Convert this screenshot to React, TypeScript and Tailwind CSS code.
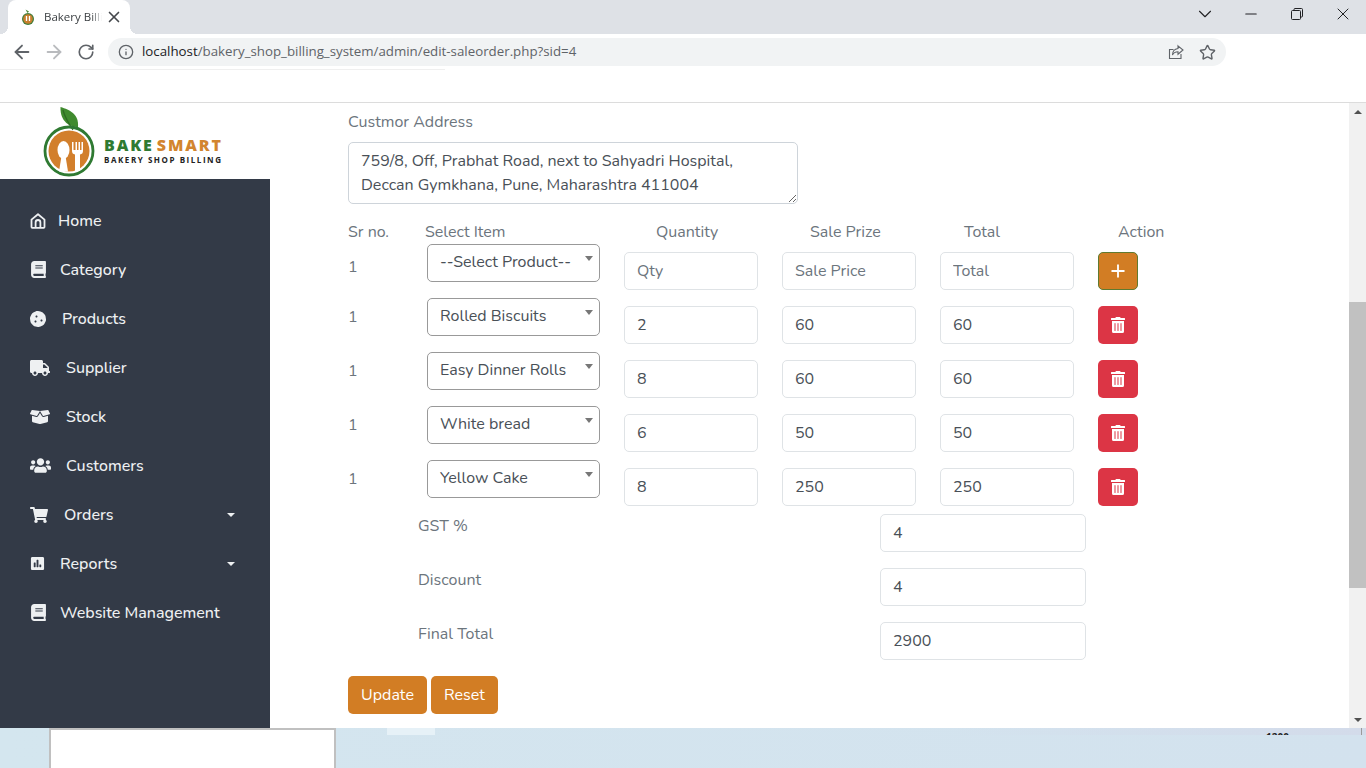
import { ArrowLeft, ArrowRight, RotateCw, Info, Star, X, ChevronDown, Minus, Plus } from 'lucide-react';
import { FaBook, FaCookie, FaTruck, FaBoxOpen, FaUsers, FaShoppingCart, FaPoll, FaTrashAlt } from 'react-icons/fa';

const body = "font-['Nunito','Lato','Open_Sans',sans-serif]";

function HomeIcon() {
  return (
    <svg width="16" height="16" viewBox="0 0 16 16" fill="none" stroke="currentColor" strokeWidth="1.8" strokeLinejoin="round">
      <path d="M1.5 6.6 8 1.2l6.500 5.400V14a.8.8 0 0 1-.8.8H2.300a.8.8 0 0 1-.8-.8Z" />
      <path d="M5.600 14.800V9.400a2.400 2.400 0 0 1 4.800 0v5.400" />
    </svg>
  );
}

const navItems = [
  { label: 'Home', icon: <HomeIcon />, box: 'w-[28px]' },
  { label: 'Category', icon: <FaBook size={17} />, box: 'w-[30px]' },
  { label: 'Products', icon: <FaCookie size={16} />, box: 'w-[32px]' },
  { label: 'Supplier', icon: <FaTruck size={20} />, box: 'w-[36px]' },
  { label: 'Stock', icon: <FaBoxOpen size={20} />, box: 'w-[36px]' },
  { label: 'Customers', icon: <FaUsers size={21} />, box: 'w-[36px]' },
  { label: 'Orders', icon: <FaShoppingCart size={18} />, box: 'w-[34px]', caret: true },
  { label: 'Reports', icon: <FaPoll size={15} />, box: 'w-[30px]', caret: true },
  { label: 'Website Management', icon: <FaBook size={17} />, box: 'w-[30px]' },
];

const rows = [
  { item: 'Rolled Biscuits', qty: '2', price: '60', total: '60' },
  { item: 'Easy Dinner Rolls', qty: '8', price: '60', total: '60' },
  { item: 'White bread', qty: '6', price: '50', total: '50' },
  { item: 'Yellow Cake', qty: '8', price: '250', total: '250' },
];

const totals = [
  { label: 'GST %', value: '4' },
  { label: 'Discount', value: '4' },
  { label: 'Final Total', value: '2900' },
];

const inputClass =
  'h-[38px] w-[134px] rounded-[5px] border border-[#dfe3e6] bg-white px-3 text-base text-[#495057] outline-none placeholder:text-[#6c757d]';

function SelectBox({ text }: { text: string }) {
  return (
    <div className="flex h-[38px] w-[173px] shrink-0 items-start justify-between rounded-[5px] border border-[#999] bg-white pl-3 pr-[6px] pt-[5px] text-[#495057]">
      <span className="leading-6">{text}</span>
      <span className="mt-[6px] h-0 w-0 border-x-[4px] border-t-[5px] border-x-transparent border-t-[#777]" />
    </div>
  );
}

function BrowserBar() {
  return (
    <div className="font-['Open_Sans',sans-serif]">
      <div className="flex h-[34px] bg-[#dee1e6] pl-2">
        <div className="relative flex h-[34px] w-[122px] items-center rounded-t-lg bg-white pl-[12px]">
          <span className="absolute -left-2 bottom-0 h-2 w-2 bg-[radial-gradient(circle_at_0_0,transparent_8px,white_8px)]" />
          <span className="absolute -right-2 bottom-0 h-2 w-2 bg-[radial-gradient(circle_at_100%_0,transparent_8px,white_8px)]" />
          <svg width="16" height="18" viewBox="0 0 16 18">
            <path d="M7.500 5 5.500 1.500 9 3.500Z" fill="#4a8a35" />
            <circle cx="8" cy="11" r="6" fill="#3f7d3a" />
            <circle cx="8" cy="11" r="4.800" fill="#c97f2e" />
            <path d="M6.500 8v5M9.500 8v5" stroke="#fff" strokeWidth="1.300" />
          </svg>
          <span className="ml-[8px] w-[58px] whitespace-nowrap text-[11.5px] text-[#3c4043] [mask-image:linear-gradient(90deg,#000_82%,transparent)]">Bakery Billi</span>
          <X size={18} strokeWidth={2.2} className="ml-[3px] text-[#45484c]" />
        </div>
        <div className="ml-auto flex items-center pb-[6px] text-[#202124]">
          <div className="flex w-[46px] justify-center"><ChevronDown size={22} strokeWidth={1.2} /></div>
          <div className="flex w-[46px] justify-center"><Minus size={18} strokeWidth={1.4} /></div>
          <div className="flex w-[46px] justify-center">
            <svg width="12" height="12" viewBox="0 0 12 12" fill="none" stroke="currentColor">
              <rect x=".5" y="2.500" width="9" height="9" rx="1" />
              <path d="M3 2.500V1.500a1 1 0 0 1 1-1h6.500a1 1 0 0 1 1 1V8a1 1 0 0 1-1 1h-1" />
            </svg>
          </div>
          <div className="flex w-[46px] justify-center"><X size={20} strokeWidth={1.2} /></div>
        </div>
      </div>
      <div className="flex h-[35px] items-center bg-white pl-[11px] pt-[1px]">
        <ArrowLeft size={22} strokeWidth={2} className="text-[#5f6368]" />
        <ArrowRight size={22} strokeWidth={2} className="ml-[10px] text-[#b9bbbe]" />
        <RotateCw size={18} strokeWidth={2.2} className="ml-[12px] text-[#5f6368]" />
        <div className="ml-[13px] flex h-[28px] w-[1118px] items-center rounded-full bg-[#f1f3f4] pl-[10px] pr-[10px]">
          <Info size={16} strokeWidth={2} className="text-[#5f6368]" />
          <span className="ml-[8px] text-[13.3px] text-[#202124]">
            localhost<span className="text-[#5f6368]">/bakery_shop_billing_system/admin/edit-saleorder.php?sid=4</span>
          </span>
          <svg className="ml-auto text-[#5f6368]" width="16" height="16" viewBox="0 0 16 16" fill="none" stroke="currentColor" strokeWidth="1.100">
            <path d="M13 10v4.500H1.500V5.500h4" />
            <path d="M10 1.800 15 6l-5 4.200V7.800C7.500 7.800 5.500 8.800 4.500 11c0-3.500 2-6 5.500-6.500Z" />
          </svg>
          <Star size={17} strokeWidth={2} className="ml-[15px] text-[#5f6368]" />
        </div>
      </div>
    </div>
  );
}

function Logo() {
  return (
    <div className="flex h-[76px] pl-[40px]">
      <svg width="60" height="76" viewBox="40 103 60 76">
        <path d="M60.500 107C70 110 79 114 78 127C70 127 60 122 60.500 107Z" fill="#3f8a2e" />
        <path d="M63 110C65 118 69 124 73 130" fill="none" stroke="#2d6b22" strokeWidth="1.200" />
        <circle cx="69" cy="151" r="24" fill="none" stroke="#2f7a32" strokeWidth="2.800" />
        <circle cx="69" cy="151" r="20.500" fill="#d27f2c" />
        <ellipse cx="63.500" cy="150" rx="6" ry="9" fill="#fff" />
        <path d="M61.500 156h4l2.500 15.500h-9Z" fill="#fff" />
        <path d="M72 142v9q0 3 3 3.500V171h5v-16.500q3-.5 3-3.500v-9h-1.500v8h-1.500v-8h-1.500v8h-1.500v-8h-1.500v8H73.500v-8Z" fill="#fff" />
      </svg>
      <div className="ml-[4px] mt-[33px] font-['Open_Sans',sans-serif]">
        <div className="text-[16px] font-extrabold leading-[19px] tracking-[1.9px] whitespace-nowrap text-[#2f7a32]">
          BAKE <span className="-ml-[3px] text-[#d2852f]">SMART</span>
        </div>
        <div className="text-[8px] font-bold leading-[10px] tracking-[1.55px] whitespace-nowrap text-[#222]">BAKERY SHOP BILLING</div>
      </div>
    </div>
  );
}

function Sidebar() {
  return (
    <aside className="flex w-[270px] shrink-0 flex-col">
      <Logo />
      <nav className="flex-1 bg-[#333a47] pl-[30px] pr-[35px] pt-[17px] text-[#eef0f2]">
        {navItems.map((n) => (
          <div key={n.label} className="flex h-[49px] items-center font-medium">
            <span className={`${n.box} shrink-0`}>{n.icon}</span>
            <span>{n.label}</span>
            {n.caret && <span className="ml-auto h-0 w-0 border-x-[4px] border-t-[4px] border-x-transparent border-t-[#eef0f2]" />}
          </div>
        ))}
      </nav>
    </aside>
  );
}

function ScrollBar() {
  return (
    <div className="flex w-[17px] shrink-0 flex-col items-center bg-[#f1f1f1]">
      <div className="flex h-[17px] items-center"><span className="h-0 w-0 border-x-[4px] border-b-[4px] border-x-transparent border-b-[#505050]" /></div>
      <div className="mt-[182px] h-[286px] w-full bg-[#c1c1c1]" />
      <div className="mt-auto flex h-[17px] items-center"><span className="h-0 w-0 border-x-[4px] border-t-[4px] border-x-transparent border-t-[#505050]" /></div>
    </div>
  );
}

function OrderForm() {
  return (
    <main className="flex-1 overflow-hidden pl-[78px] pt-[7px] text-[#6c757d]">
      <div className="leading-6">Custmor Address</div>
      <textarea
        readOnly
        className="mt-[8px] block h-[62px] w-[450px] rounded-[5px] border border-[#ced4da] px-3 py-[6px] leading-6 text-[#495057] outline-none"
        defaultValue={'759/8, Off, Prabhat Road, next to Sahyadri Hospital,\nDeccan Gymkhana, Pune, Maharashtra 411004'}
      />
      <div className="mt-[16px] flex h-[24px] leading-6">
        <span className="w-[77px]">Sr no.</span>
        <span className="w-[231px]">Select Item</span>
        <span className="w-[154px]">Quantity</span>
        <span className="w-[154px]">Sale Prize</span>
        <span className="w-[154px]">Total</span>
        <span>Action</span>
      </div>
      <div className="flex h-[54px] items-start">
        <span className="w-[79px] shrink-0 pt-[11px] leading-6">1</span>
        <SelectBox text="--Select Product--" />
        <div className="ml-6 mt-2 flex gap-6">
          <input readOnly placeholder="Qty" className={inputClass} />
          <input readOnly placeholder="Sale Price" className={inputClass} />
          <input readOnly placeholder="Total" className={inputClass} />
          <button className="flex h-[38px] w-[40px] items-center justify-center rounded-[5px] border border-[#5f7a30] bg-[#d27d24] text-white"><Plus size={20} strokeWidth={2.2} /></button>
        </div>
      </div>
      {rows.map((r) => (
        <div key={r.item} className="flex h-[54px] items-start">
          <span className="w-[79px] shrink-0 pt-[7px] leading-6">1</span>
          <SelectBox text={r.item} />
          <div className="ml-6 mt-2 flex gap-6">
            <input readOnly defaultValue={r.qty} className={inputClass} />
            <input readOnly defaultValue={r.price} className={inputClass} />
            <input readOnly defaultValue={r.total} className={inputClass} />
            <button className="flex h-[38px] w-[40px] items-center justify-center rounded-[5px] bg-[#dc3545] text-white"><FaTrashAlt size={16} /></button>
          </div>
        </div>
      ))}
      {totals.map((t) => (
        <div key={t.label} className="flex h-[54px] items-start pl-[70px]">
          <span className="w-[462px] leading-6">{t.label}</span>
          <input readOnly defaultValue={t.value} className="h-[38px] w-[206px] rounded-[5px] border border-[#dfe3e6] bg-white px-3 text-[#495057] outline-none" />
        </div>
      ))}
      <div className="flex gap-1">
        <button className="h-[38px] w-[79px] rounded-[5px] bg-[#d27d24] text-white">Update</button>
        <button className="h-[38px] w-[67px] rounded-[5px] bg-[#d27d24] text-white">Reset</button>
      </div>
    </main>
  );
}

function DesktopStrip() {
  return (
    <div className="flex h-[40px] bg-[linear-gradient(90deg,#d4e6ef,#d3e2ee)]">
      <div className="ml-[49px] h-[40px] w-[287px] shrink-0 border-x-2 border-t-2 border-[#c0c0c0] bg-white" />
      <div className="flex h-[7px] flex-1 bg-[linear-gradient(90deg,transparent_60%,#d3dbea)] pl-[51px] pr-[4px]">
        <div className="h-[7px] w-[48px] bg-[#e6f1f7]" />
        <div className="ml-[831px] mt-[5px] h-[2px] w-[26px] overflow-hidden font-['Open_Sans',sans-serif] text-[10px] font-bold leading-[9px] text-[#222]">1200</div>
        <div className="ml-auto h-[7px] w-px bg-[#9a9a9a]" />
      </div>
    </div>
  );
}

export default function App() {
  return (
    <div className={`flex h-screen w-[1366px] flex-col overflow-hidden bg-white ${body}`}>
      <BrowserBar />
      <div className="flex min-h-0 flex-1 flex-col">
        <div className="h-[34px] shrink-0 border-b border-[#dcdcdc]">
          <div className="h-px w-[445px] bg-[#efefef]" />
        </div>
        <div className="flex min-h-0 flex-1">
          <Sidebar />
          <OrderForm />
          <ScrollBar />
        </div>
      </div>
      <DesktopStrip />
    </div>
  );
}
